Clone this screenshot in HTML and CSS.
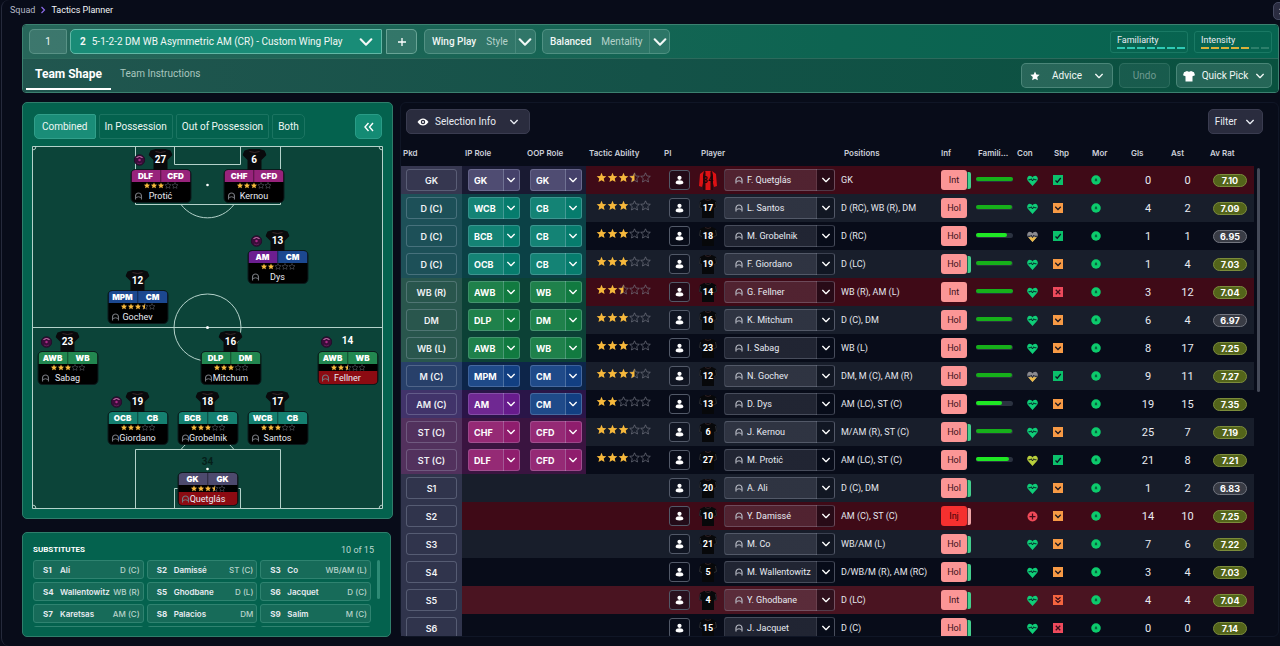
FILE: index.html
```html
<!DOCTYPE html>
<html lang="en">
<head>
<meta charset="utf-8">
<meta name="viewport" content="width=device-width, initial-scale=1">
<title>Tactics Planner</title>
<link rel="stylesheet" href="styles.css">
</head>
<body>
<svg class="sprite" aria-hidden="true">
  <symbol id="chev" viewBox="0 0 12 12"><path d="M2 4l4 4 4-4" fill="none" stroke="currentColor" stroke-width="1.6" stroke-linecap="round" stroke-linejoin="round"/></symbol>
  <symbol id="star" viewBox="0 0 20 20"><path d="M10 1l2.700 6 6.600.7-4.900 4.400 1.400 6.500L10 15.300l-5.800 3.300 1.400-6.500L.7 7.700l6.600-.7z"/></symbol>
  <symbol id="face" viewBox="0 0 16 16"><path d="M2 15V8a6 6 0 0 1 12 0v7" fill="none" stroke="currentColor" stroke-width="2.400"/><path d="M3 11q5-3 10 0" fill="none" stroke="currentColor" stroke-width="2"/></symbol>
  <symbol id="person" viewBox="0 0 16 18"><circle cx="8" cy="5" r="3.800"/><path d="M1 14c0-3 3-4.500 7-4.500s7 1.500 7 4.500c0 1.800-3 3-7 3s-7-1.200-7-3z"/></symbol>
  <symbol id="shirt" viewBox="0 0 24 22"><path d="M7 1h10l5 1.500L24 7l-5 5v10H5V12L0 7l2-4.500z" fill="#090a0c"/><path d="M7 3.500q5 2 10 0" fill="none" stroke="#3a2629" stroke-width="1"/></symbol>
  <symbol id="kit" viewBox="0 0 18 20"><path d="M5 1h8l4 2 1 7-3 1v9H3v-9l-3-1 1-7z" fill="#07080a"/><path d="M1.500 4L.5 9.500 3 10.500M16.500 4l1 5.500-2.500 1" fill="none" stroke="#34363d" stroke-width=".8"/><path d="M6 1.500q3 2 6 0" fill="none" stroke="#3a2629" stroke-width=".8"/></symbol>
  <symbol id="stripes" viewBox="0 0 18 20"><path d="M5 1h8l4 3 1 12-3 1-1-4v7H4v-7l-1 4-3-1L1 4z" fill="#dd1114"/><path d="M5 1l1.500.5V20H4V5zM13 1l-1.500.5V20H14V5z" fill="#2a070b"/></symbol>
  <symbol id="heart" viewBox="0 0 22 22"><path d="M11 22L2 12C-1.500 8 1 1.500 5.500 1.500 8 1.500 10 3 11 5 12 3 14 1.500 16.500 1.500 21 1.500 23.500 8 20 12z" fill="currentColor"/><path d="M3 9.500h3.500l2-2 2.500 4.500 2.500-4.500 2 2H19" fill="none" stroke="#081020" stroke-width="1.800"/></symbol>
  <symbol id="heart-low" viewBox="0 0 22 22"><path d="M11 22L2 12C-1.500 8 1 1.500 5.500 1.500 8 1.500 10 3 11 5 12 3 14 1.500 16.500 1.500 21 1.500 23.500 8 20 12z" fill="#8a8a90"/><path d="M2.500 12.500h17L11 22z" fill="#edba48"/><path d="M2 10.500h4.500l2-2L11 13l2.500-4.500 2 2H20" fill="none" stroke="#081020" stroke-width="1.800"/></symbol>
  <symbol id="injury" viewBox="0 0 22 22"><circle cx="11" cy="11" r="10" fill="#f04a58"/><path d="M11 5v12M5 11h12" stroke="#400b18" stroke-width="2.500"/></symbol>
  <symbol id="check" viewBox="0 0 20 20"><path d="M0 0h20v20H0z" fill="#0bc16b"/><path d="M5 11l3.500 3.500L15.500 6" fill="none" stroke="#0b1524" stroke-width="2.500"/></symbol>
  <symbol id="ok" viewBox="0 0 20 20"><path d="M0 0h20v20H0z" fill="#f79a45"/><path d="M4.500 7.500L10 13l5.500-5.500" fill="none" stroke="#1a1620" stroke-width="2.500"/></symbol>
  <symbol id="low" viewBox="0 0 20 20"><path d="M0 0h20v20H0z" fill="#f5653f"/><path d="M5 4.500L10 9l5-4.500M5 10.500L10 15l5-4.500" fill="none" stroke="#3a0d18" stroke-width="2.500"/></symbol>
  <symbol id="bad" viewBox="0 0 20 20"><path d="M0 0h20v20H0z" fill="#ee4a5c"/><path d="M5.500 5.500l9 9M14.500 5.500l-9 9" fill="none" stroke="#3a0d18" stroke-width="2.500"/></symbol>
  <symbol id="morale" viewBox="0 0 22 22"><circle cx="11" cy="11" r="10.500" fill="#0ccb6c"/><path d="M8.500 14.500V10L11 6.500l2.500 3.500v4.500L11 13z" fill="#07633f"/></symbol>
  <symbol id="ball" viewBox="0 0 24 24"><circle cx="12" cy="12" r="10.500" fill="#3b0d3a" stroke="#20102a" stroke-width="2"/><path d="M6 7q6-4 12 0" fill="none" stroke="#d97fb6" stroke-width="2"/><circle cx="12" cy="12" r="2.500" fill="#a82c86"/><path d="M7 18q5 3 10 0" fill="none" stroke="#6d2464" stroke-width="1.500"/></symbol>
</svg>

<div class="frame">
  <header class="crumbs">
    <nav aria-label="Breadcrumb"><a href="#">Squad</a><svg viewBox="0 0 8 10"><path d="M2 1l4 4-4 4" fill="none" stroke="#8d6bea" stroke-width="1.600"/></svg><span>Tactics Planner</span></nav>
    <button class="close" aria-label="Close"><svg viewBox="0 0 10 10"><path d="M1 1l8 8M9 1L1 9" stroke="#fff" stroke-width="1.800"/></svg></button>
  </header>

  <section class="toolbar">
    <div class="bar bar-top">
      <button class="tb slot">1</button>
      <button class="tb tactic"><b>2</b><span>5-1-2-2 DM WB Asymmetric AM (CR) - Custom Wing Play</span><svg class="ic16"><use href="#chev"/></svg></button>
      <button class="tb add" aria-label="Add tactic"><svg class="ic10" viewBox="0 0 10 10"><path d="M5 1v8M1 5h8" stroke="#fff" stroke-width="1.300"/></svg></button>
      <button class="tb choice"><span>Wing Play</span><i>Style</i><em><svg class="ic16"><use href="#chev"/></svg></em></button>
      <button class="tb choice"><span>Balanced</span><i>Mentality</i><em><svg class="ic16"><use href="#chev"/></svg></em></button>
      <div class="meters">
        <div class="meter teal"><span>Familiarity</span><div class="dashes"><i></i><i></i><i></i><i></i><i></i><i></i><i></i></div></div>
        <div class="meter gold"><span>Intensity</span><div class="dashes"><i></i><i></i><i></i><i></i><i></i><i class="off"></i><i class="off"></i></div></div>
      </div>
    </div>
    <div class="bar bar-bottom">
      <nav class="tabs"><a class="active" href="#">Team Shape</a><a href="#">Team Instructions</a></nav>
      <div class="actions">
        <button class="tb advice"><svg class="ic10 fill"><use href="#star"/></svg>Advice<svg class="ic10"><use href="#chev"/></svg></button>
        <button class="tb undo" disabled>Undo</button>
        <button class="tb pick"><svg class="ic12" viewBox="0 0 24 22"><path d="M8 1q4 3 8 0l6 2.500 2 6-5 2v10.500H5V11.500L0 9.500l2-6z" fill="#fff"/></svg>Quick Pick<svg class="ic10"><use href="#chev"/></svg></button>
      </div>
    </div>
  </section>

  <main>
    <div class="left">
      <section class="pitch-panel">
        <div class="modes">
          <button class="on">Combined</button><button>In Possession</button><button>Out of Possession</button><button class="last">Both</button>
          <button class="collapse" aria-label="Collapse"><svg viewBox="0 0 12 12"><path d="M5.500 2L2 6l3.500 4M10 2L6.500 6 10 10" fill="none" stroke="#fff" stroke-width="1.400"/></svg></button>
        </div>
        <div class="pitch" id="pitch">
          <svg class="lines" viewBox="0 0 351 363" aria-hidden="true">
            <g fill="none" stroke="#b4d2ca" stroke-width="1">
              <path d="M.5.5h350v362H.5zM.5 181.500h350M103.500.5v58h145V.5M142.500.5v18h66V.5M149 58.500a33 33 0 0 0 53 0M103.500 362.500v-59h145v59M142.500 362.500v-20h66v20M149 303.500a33 33 0 0 1 53 0"/>
              <circle cx="175.500" cy="181.500" r="33.500"/>
              <path d="M4 .5a3.500 3.500 0 0 1-3.500 3.500M347 .5a3.500 3.500 0 0 0 3.500 3.500M4 362.500a3.500 3.500 0 0 0-3.500-3.500M347 362.500a3.500 3.500 0 0 1 3.500-3.500"/>
            </g>
            <g fill="#fff"><circle cx="175.500" cy="39" r="1.300"/><circle cx="175.500" cy="181.500" r="1.500"/><circle cx="175.500" cy="323" r="1.300"/></g>
          </svg>
        </div>
      </section>
      <section class="subs">
        <div class="subs-head"><h2>SUBSTITUTES</h2><span>10 of 15</span></div>
        <div class="subs-scroll"><div class="subs-grid" id="subs"></div><div class="thumb"></div></div>
      </section>
    </div>

    <section class="squad">
      <div class="squad-tools">
        <button class="dark info"><svg class="ic12" viewBox="0 0 24 24"><path d="M1 12q5-7 11-7t11 7q-5 7-11 7T1 12z" fill="#fff"/><circle cx="12" cy="12" r="4.500" fill="#2a2c3e"/><circle cx="12" cy="12" r="2" fill="#fff"/></svg>Selection Info<svg class="ic10"><use href="#chev"/></svg></button>
        <button class="dark">Filter<svg class="ic10"><use href="#chev"/></svg></button>
      </div>
      <div class="table-wrap">
        <table>
          <colgroup><col class="w61"><col class="w62"><col class="w62"><col class="w76"><col class="w31"><col class="w145"><col class="w100"><col class="w34"><col class="w42"><col class="w34"><col class="w36"><col class="w42"><col class="w40"><col class="w39"><col class="w49"></colgroup>
          <thead><tr><th class="h-pkd">Pkd</th><th>IP Role</th><th>OOP Role</th><th>Tactic Ability</th><th class="h-pi">PI</th><th class="h-player">Player</th><th class="h-pos">Positions</th><th>Inf</th><th class="h-fam">Famili...</th><th>Con</th><th class="h-shp">Shp</th><th class="h-mor">Mor</th><th class="h-num">Gls</th><th class="h-num">Ast</th><th class="h-num">Av Rat</th></tr></thead>
          <tbody id="rows"></tbody>
        </table>
        <div class="vbar"></div>
      </div>
    </section>
  </main>
</div>
<script src="app.js"></script>
</body>
</html>
```
FILE: styles.css
```css
* { box-sizing: border-box; }
body { margin: 0; height: 100vh; overflow: hidden; background: #080c19; color: #e8ebf2; font-family: Roboto, "Liberation Sans", sans-serif; font-size: 10px; }
button, select { font: inherit; color: inherit; margin: 0; }
a { color: inherit; text-decoration: none; }
i, em { font-style: normal; }
svg { display: block; flex: none; }
.sprite { position: absolute; width: 0; height: 0; }
.ic10 { width: 10px; height: 10px; }
.ic12 { width: 12px; height: 12px; }
.ic16 { width: 16px; height: 16px; }
.fill { fill: #fff; }

.frame { height: 100vh; margin-left: 1px; padding: 0 1px 9px 20px; border-left: 1px solid #252a3b; border-radius: 8px 0 0 8px; display: flex; flex-direction: column; }
.crumbs { height: 24px; display: flex; align-items: flex-start; justify-content: space-between; margin-left: -12px; margin-right: -12px; }
.crumbs nav { display: flex; align-items: center; gap: 5px; padding-top: 5px; font-size: 9px; color: #b5bac8; }
.crumbs nav span { color: #f2f4f8; }
.crumbs nav svg { width: 6px; height: 8px; }
.close { width: 18px; height: 18px; margin-top: 2px; padding: 0 5px; border: 1px solid #454a60; border-radius: 5px; background: #2a2c40; }
.close svg { width: 7px; height: 7px; }

.toolbar { border: 1px solid #3c8170; border-radius: 4px; overflow: hidden; flex: none; }
.bar { display: flex; align-items: center; height: 34px; padding: 0 6px; }
.bar-top { background: linear-gradient(90deg, #27665a, #0d6451 65%, #066450); border-bottom: 1px solid #2c6a5c; }
.bar-bottom { height: 33px; background: linear-gradient(90deg, #21564f, #145248 50%, #09513f); padding: 0 6px 0 3px; justify-content: space-between; }
.tb { height: 25px; border: 1px solid rgba(160, 210, 195, .3); border-radius: 5px; background: rgba(150, 190, 185, .2); display: flex; align-items: center; justify-content: center; padding: 0; color: #f1f7f5; white-space: nowrap; flex: none; }
.slot { width: 38px; border-radius: 5px 2px 2px 5px; margin-right: 3px; }
.tactic { width: 312px; background: #198c77; border-color: #62b8a6; border-radius: 5px 1px 1px 5px; padding: 0 7px 0 9px; gap: 6px; margin-right: 4px; }
.tactic span { flex: 1; text-align: left; }
.add { width: 31px; border-radius: 1px 5px 5px 1px; border-color: rgba(160, 210, 195, .5); margin-right: 7px; }
.choice { padding-left: 7px; margin-right: 6px; }
.choice span { font-weight: 500; }
.choice i { color: #b6d2ca; margin: 0 7px 0 10px; }
.choice em { height: 23px; width: 20px; border-left: 1px solid rgba(160, 210, 195, .2); display: flex; align-items: center; justify-content: center; }
.meters { margin-left: auto; display: flex; gap: 6px; }
.meter { width: 78px; height: 22px; border: 1px solid #1a7964; border-radius: 3px; padding: 3px 2px 0 6px; font-size: 9px; line-height: 11px; }
.dashes { display: flex; gap: 2px; margin-top: 1px; }
.dashes i { flex: 1; height: 2px; background: #2fc9b4; }
.gold .dashes i { background: #d9b13a; }
.gold .dashes .off { background: #2d7f6b; }
.tabs { display: flex; align-self: stretch; }
.tabs a { display: flex; align-items: center; padding: 0 9px; color: #a9c6bf; border-bottom: 2px solid transparent; margin-bottom: 2px; }
.tabs .active { font-weight: 700; font-size: 12px; color: #fff; border-color: #fff; }
.actions { display: flex; gap: 6px; }
.advice { width: 92px; gap: 12px; }
.undo { width: 51px; color: #6f9a90; background: rgba(150, 190, 185, .1); border-color: rgba(160, 210, 195, .15); }
.pick { width: 96px; gap: 7px; }

main { flex: 1; min-height: 0; display: grid; grid-template-columns: 371px minmax(0, 1fr); gap: 7px; padding-top: 9px; }
.left { display: flex; flex-direction: column; gap: 13px; }
.pitch-panel, .subs { background: #04624e; border: 1px solid #2f7e6b; border-radius: 5px; }
.pitch-panel { padding: 11px 9px 9px; }
.modes { display: flex; gap: 3px; padding: 0 1px 7px 2px; }
.modes button { height: 25px; padding: 0 5px; border: 1px solid #1b7461; background: transparent; border-radius: 2px; color: #eef7f4; white-space: nowrap; }
.modes .on { background: #1a8d78; border-color: #319f8a; border-radius: 5px 2px 2px 5px; padding: 0 7px; }
.modes .last { border-radius: 2px 5px 5px 2px; }
.modes .collapse { margin-left: auto; width: 27px; background: #148b74; border-color: #2a9c87; border-radius: 5px; display: grid; place-items: center; }
.collapse svg { width: 12px; height: 12px; }
.pitch { position: relative; background: #0c4439; aspect-ratio: 351 / 363; }
.lines { width: 100%; }
.card { position: absolute; width: 61px; transform: translateX(-50%); }
.card .top { position: relative; height: 21px; display: grid; place-items: center; }
.card .top > svg { grid-area: 1 / 1; width: 24px; height: 22px; }
.card .num { grid-area: 1 / 1; font-weight: 700; font-size: 10px; color: #fff; }
.card .num.faint { color: #051f1a; }
.card .top .orb { position: absolute; left: 3px; top: 6px; width: 12px; height: 12px; }
.card .box { border: 1px solid #0b1a1c; border-radius: 5px; overflow: hidden; background: #000; }
.card .roles { display: flex; font: 700 8px/12px Inter, sans-serif; text-align: center; color: #fff; }
.card .roles b { flex: 1 1 0; }
.card .roles b + b { border-left: 1px solid rgba(0, 0, 0, .25); }
.card .stars { height: 7px; width: 35px; margin: 0 auto; }
.card .name { display: grid; grid-template-columns: 8px 1fr 8px; align-items: center; height: 13px; font-size: 9px; padding: 0 3px; }
.card .name span { justify-self: center; white-space: nowrap; }
.card .name svg { width: 8px; height: 8px; color: #74767c; }
.card .name.red { background: #8c0b12; }
.r-gk { background: #4d4a6e; } .r-cb { background: #158070; } .r-wb { background: #228750; } .r-cm { background: #1c4890; } .r-am { background: #6c1e90; } .r-st { background: #97237b; }

.subs { flex: 1; min-height: 0; width: 369px; padding: 10px 10px 8px; display: flex; flex-direction: column; }
.subs-head { display: flex; justify-content: space-between; align-items: center; height: 13px; padding-right: 6px; font-size: 9px; color: #bcd8d0; margin-bottom: 4px; }
.subs h2 { margin: 0; font: 700 8px Roboto, sans-serif; color: #fff; }
.subs-scroll { display: flex; gap: 6px; overflow: hidden; max-height: 67px; }
.subs-grid { flex: 1; display: grid; grid-template-columns: repeat(3, 1fr); grid-auto-rows: 19px; gap: 3px; }
.sub { display: flex; align-items: center; background: #176b59; border: 1px solid #2f8370; border-radius: 3px; padding: 0 3px 0 9px; font: 600 8px "Inter", sans-serif; white-space: nowrap; }
.sub b { width: 17px; font-weight: 700; }
.sub span { flex: 1; }
.sub i { color: #b9d3cb; font-weight: 500; }
.thumb { width: 3px; height: 39px; border-radius: 2px; background: #2d8a75; }

.squad { border: 1px solid #101626; border-radius: 6px; min-height: 0; display: flex; flex-direction: column; min-width: 0; }
.squad-tools { display: flex; justify-content: space-between; padding: 6px 15px 6px 5px; }
.dark { height: 25px; padding: 0 7px 0 6px; border: 1px solid #3a3c50; border-radius: 5px; background: #2a2c3e; display: flex; align-items: center; gap: 8px; }
.dark.info { padding: 0 10px; gap: 6px; }
.info .ic10 { margin-left: 7px; }
.table-wrap { flex: 1; min-height: 0; overflow: hidden; display: flex; align-items: flex-start; gap: 3px; padding-right: 18px; }
.vbar { width: 3px; height: 224px; margin-top: 28px; border-radius: 2px; background: #454a58; }
table { flex: 1; min-width: 0; width: 100%; table-layout: fixed; border-collapse: collapse; }
.w61 { width: 61px; } .w62 { width: 62px; } .w76 { width: 76px; } .w31 { width: 31px; } .w145 { width: 145px; } .w100 { width: 100px; } .w34 { width: 34px; } .w42 { width: 42px; } .w36 { width: 36px; } .w40 { width: 40px; } .w39 { width: 39px; } .w49 { width: 49px; }
th { height: 26px; padding: 0 0 0 3px; text-align: left; font: 600 8px Inter, sans-serif; color: #ccd0da; white-space: nowrap; }
th.h-pkd { padding-left: 2px; } th.h-pi { padding-left: 2px; } th.h-player { padding-left: 8px; } th.h-pos, th.h-fam, th.h-shp { padding-left: 6px; } th.h-mor { padding-left: 8px; } th.h-num { padding-left: 5px; }
td { height: 28px; padding: 0 0 0 3px; white-space: nowrap; }
tbody tr:nth-child(even) { background: #181e2b; }
tbody tr.alert { background: #3f0a17; }
tbody tr.alert.hover { background: #4a1421; }
td.pkd { padding: 0 5px; }
.pkd span { display: grid; place-items: center; height: 22px; border: 1px solid rgba(200, 210, 230, .25); border-radius: 3px; font: 600 9px Inter, sans-serif; color: #f0f2f6; }
.sel { display: grid; align-items: center; }
.sel select, .sel svg { grid-area: 1 / 1; }
.sel select { appearance: none; height: 22px; width: 100%; border: 1px solid rgba(210, 220, 240, .22); border-radius: 3px; outline: 0; }
.sel svg { width: 10px; height: 10px; justify-self: end; margin-right: 4px; pointer-events: none; color: #fff; }
.role { width: 52px; margin-left: 3px; }
.role select { padding: 0 0 0 5px; font: 700 9px Inter, sans-serif; color: #fff; background: linear-gradient(90deg, rgba(255, 255, 255, .06) 34px, rgba(210, 225, 240, .3) 34px, rgba(210, 225, 240, .3) 35px, transparent 35px); }
.g-gk .pkd { background: #363750; } .g-gk .rc { background: #191a32; } .g-gk .role { background: #45416a; }
.g-cb .pkd { background: #1d5058; } .g-cb .rc { background: #0b4146; } .g-cb .role { background: #067c6d; }
.g-wb .pkd { background: #29564d; } .g-wb .rc { background: #0c4136; } .g-wb .role { background: #117a40; }
.g-cm .pkd { background: #28406a; } .g-cm .rc { background: #0d2549; } .g-cm .role { background: #123f82; }
.g-am .pkd { background: #41336a; } .g-am .rc { background: #2a1548; }
.g-st .pkd { background: #52315d; } .g-st .rc { background: #3a1440; } .g-st .role { background: #8f1d6d; }
.g-s .pkd { background: #30344c; }
.g-am .role.r-am { background: #671b8c; } .g-am .role.r-cm { background: #123f82; }
.role { border-radius: 3px; }
.stars { display: block; }
td .stars { width: 55px; height: 11px; margin: 0 0 5px 7px; }
.pi { width: 21px; height: 20px; margin-left: 4px; border: 1px solid #525968; border-radius: 3px; background: rgba(8, 12, 25, .5); display: grid; place-items: center; padding: 0; }
.pi svg { width: 9px; height: 10px; fill: #fff; }
.who { display: flex; align-items: center; gap: 7px; padding-left: 3px; }
.kit { display: grid; place-items: center; width: 18px; }
.kit svg, .kit b { grid-area: 1 / 1; }
.kit svg { width: 18px; height: 20px; }
.kit b { font-weight: 700; font-size: 9px; color: #fff; }
.kit b.faint { color: #1b0508; }
.who .sel { flex: 1; margin-right: 3px; }
.who select { padding-left: 22px; font-size: 9px; background: linear-gradient(270deg, rgba(8, 12, 25, .4) 17px, rgba(220, 225, 240, .22) 17px, rgba(220, 225, 240, .22) 18px, rgba(190, 190, 210, .14) 18px); }
.who .sel .face { justify-self: start; margin-left: 11px; width: 8px; height: 8px; color: #b7bac4; }
.who option { color: #111; }
.pos { font-size: 9px; color: #e4e7ee; }
.inf { display: flex; align-items: center; }
.inf b { width: 26px; height: 20px; border-radius: 3px; background: #fb9696; color: #3a1018; font: 400 9px/20px Roboto, sans-serif; text-align: center; }
.inf .injured { background: #f5302f; color: #3b0207; }
.inf i { width: 4px; height: 17px; border-radius: 0 2px 2px 0; background: #45ce8d; border-left: 1px solid #176b50; }
.inf .pink { background: #f0a5a5; border-color: #7c2630; }
.fam { width: 37px; height: 5px; margin: 0 0 2px 1px; border-radius: 3px; background: #2b3240; border: 1px solid #2b3240; border-width: 0 0 1px; }
.fam i { display: block; height: 4px; border-radius: 2px; background: #16b01a; }
.fam .fresh { background: #1fe824; }
.con svg { width: 11px; height: 11px; margin-left: 10px; color: #0fce78; }
.con .fair { color: #b9cf3c; }
.shp svg { width: 10px; height: 10px; margin-left: 2px; }
.mor svg { width: 10px; height: 10px; margin-left: 4px; }
.numc { text-align: center; font-size: 11px; padding-left: 4px; }
.rat { display: block; width: 34px; height: 13px; margin-left: 5px; border-radius: 7px; border: 1px solid #7c8c3b; background: #53641a; color: #fff; font: 700 9px/11px Inter, sans-serif; text-align: center; }
.rat.mid { background: #393c45; border-color: #737680; }
```
FILE: app.js
```js
const use = (id, cls = "") => `<svg class="${cls}" aria-hidden="true"><use href="#${id}"/></svg>`;

const STAR = "M10 1.500l2.500 5.700 6.300.6-4.700 4.200 1.400 6.200L10 15l-5.500 3.200 1.400-6.200L1.200 7.800l6.300-.6z";
const HALF = "M10 1.500V15l-5.500 3.200 1.400-6.200L1.200 7.800l6.300-.6z";

function stars(value) {
  let out = "";
  for (let i = 0; i < 5; i++) {
    const full = value >= i + 1;
    out += `<g transform="translate(${i * 20} 0)">`;
    out += full
      ? `<path d="${STAR}" fill="#f6b83c"/>`
      : `<path d="${STAR}" fill="none" stroke="#757985" stroke-width="1.200"/>`;
    if (!full && value > i) out += `<path d="${HALF}" fill="#f6b83c"/>`;
    out += "</g>";
  }
  return `<svg class="stars" viewBox="0 0 100 20" role="img" aria-label="${value} stars">${out}</svg>`;
}

const roleGroup = {
  GK: "gk", CB: "cb", WCB: "cb", BCB: "cb", OCB: "cb", WB: "wb", AWB: "wb",
  DM: "wb", DLP: "wb", CM: "cm", MPM: "cm", AM: "am", CHF: "st", CFD: "st", DLF: "st"
};

// x and y are measured on a 351 x 363 pitch
const cards = [
  { n: 27, name: "Protić", ip: "DLF", oop: "CFD", s: 3, x: 128.5, y: 2, orb: 1 },
  { n: 6, name: "Kernou", ip: "CHF", oop: "CFD", s: 3, x: 222, y: 2 },
  { n: 13, name: "Dys", ip: "AM", oop: "CM", s: 2, x: 245.5, y: 83, orb: 1 },
  { n: 12, name: "Gochev", ip: "MPM", oop: "CM", s: 3.5, x: 105.5, y: 123 },
  { n: 23, name: "Sabag", ip: "AWB", oop: "WB", s: 3, x: 35.5, y: 184, orb: 1 },
  { n: 16, name: "Mitchum", ip: "DLP", oop: "DM", s: 3, x: 198.5, y: 184 },
  { n: 14, name: "Fellner", ip: "AWB", oop: "WB", s: 2.5, x: 315.5, y: 184, orb: 1, red: 1, bare: 1 },
  { n: 19, name: "Giordano", ip: "OCB", oop: "CB", s: 3, x: 105.5, y: 244, orb: 1 },
  { n: 18, name: "Grobelnik", ip: "BCB", oop: "CB", s: 3, x: 175.5, y: 244 },
  { n: 17, name: "Santos", ip: "WCB", oop: "CB", s: 3, x: 245.5, y: 244 },
  { n: 34, name: "Quetglás", ip: "GK", oop: "GK", s: 3.5, x: 175.5, y: 305, red: 1, bare: 1, faint: 1 }
];

document.getElementById("pitch").insertAdjacentHTML("beforeend", cards.map(c => `
  <div class="card" style="left:${c.x / 3.51}%;top:${c.y / 3.63}%">
    <div class="top">${c.bare ? "" : use("shirt")}<span class="num${c.faint ? " faint" : ""}">${c.n}</span>${c.orb ? use("ball", "orb") : ""}</div>
    <div class="box">
      <div class="roles"><b class="r-${roleGroup[c.ip]}">${c.ip}</b><b class="r-${roleGroup[c.oop]}">${c.oop}</b></div>
      ${stars(c.s)}
      <div class="name${c.red ? " red" : ""}">${use("face")}<span>${c.name}</span></div>
    </div>
  </div>`).join(""));

const subs = [
  ["S1", "Ali", "D (C)"], ["S2", "Damissé", "ST (C)"], ["S3", "Co", "WB/AM (L)"],
  ["S4", "Wallentowitz", "WB (R)"], ["S5", "Ghodbane", "D (L)"], ["S6", "Jacquet", "D (C)"],
  ["S7", "Karetsas", "AM (C)"], ["S8", "Palacios", "DM"], ["S9", "Salim", "M (C)"],
  ["", "", ""], ["", "", ""], ["", "", ""]
];
document.getElementById("subs").innerHTML = subs.map(([slot, name, pos]) =>
  `<div class="sub"><b>${slot}</b><span>${name}</span><i>${pos}</i></div>`).join("");

// pkd, group, ip, oop, stars, number, player, positions, inf, tag, familiarity, condition, sharpness, goals, assists, rating
const rows = [
  ["GK", "gk", "GK", "GK", 3.5, 34, "F. Quetglás", "GK", "Int", 1, 100, "good", "check", 0, 0, "7.10"],
  ["D (C)", "cb", "WCB", "CB", 3, 17, "L. Santos", "D (RC), WB (R), DM", "Hol", 0, 97, "good", "ok", 4, 2, "7.09"],
  ["D (C)", "cb", "BCB", "CB", 3, 18, "M. Grobelnik", "D (RC)", "Hol", 0, 85, "tired", "check", 1, 1, "6.95"],
  ["D (C)", "cb", "OCB", "CB", 3, 19, "F. Giordano", "D (LC)", "Hol", 1, 96, "good", "ok", 1, 4, "7.03"],
  ["WB (R)", "wb", "AWB", "WB", 2.5, 14, "G. Fellner", "WB (R), AM (L)", "Int", 0, 100, "good", "bad", 3, 12, "7.04"],
  ["DM", "wb", "DLP", "DM", 3, 16, "K. Mitchum", "D (C), DM", "Hol", 0, 98, "good", "ok", 6, 4, "6.97"],
  ["WB (L)", "wb", "AWB", "WB", 3, 23, "I. Sabag", "WB (L)", "Hol", 0, 98, "good", "ok", 8, 17, "7.25"],
  ["M (C)", "cm", "MPM", "CM", 3.5, 12, "N. Gochev", "DM, M (C), AM (R)", "Hol", 0, 98, "tired", "check", 9, 11, "7.27"],
  ["AM (C)", "am", "AM", "CM", 2, 13, "D. Dys", "AM (LC), ST (C)", "Hol", 0, 70, "good", "ok", 19, 15, "7.35"],
  ["ST (C)", "st", "CHF", "CFD", 3, 6, "J. Kernou", "M/AM (R), ST (C)", "Hol", 1, 98, "good", "ok", 25, 7, "7.19"],
  ["ST (C)", "st", "DLF", "CFD", 3, 27, "M. Protić", "AM (LC), ST (C)", "Hol", 0, 90, "fair", "check", 21, 8, "7.21"],
  ["S1", "s", "", "", 0, 20, "A. Ali", "D (C), DM", "Hol", 1, 0, "good", "ok", 1, 2, "6.83"],
  ["S2", "s", "", "", 0, 10, "Y. Damissé", "AM (C), ST (C)", "Inj", 2, 0, "injury", "ok", 14, 10, "7.25"],
  ["S3", "s", "", "", 0, 21, "M. Co", "WB/AM (L)", "Hol", 1, 0, "good", "ok", 7, 6, "7.22"],
  ["S4", "s", "", "", 0, 5, "M. Wallentowitz", "D/WB/M (R), AM (RC)", "Hol", 1, 0, "good", "ok", 3, 4, "7.03"],
  ["S5", "s", "", "", 0, 4, "Y. Ghodbane", "D (LC)", "Int", 1, 0, "good", "low", 4, 4, "7.04"],
  ["S6", "s", "", "", 0, 15, "J. Jacquet", "D (C)", "Hol", 1, 0, "good", "bad", 0, 0, "7.14"]
];

const role = (name, label) => name
  ? `<div class="sel role r-${roleGroup[name]}"><select aria-label="${label}"><option>${name}</option></select>${use("chev")}</div>` : "";

const condition = con => con === "injury" ? use("injury") : con === "tired" ? use("heart-low") : use("heart", con);

document.getElementById("rows").innerHTML = rows.map(r => {
  const [pkd, group, ip, oop, ability, num, player, pos, inf, tag, fam, con, shp, gls, ast, rating] = r;
  const alert = inf !== "Hol" ? (pkd === "S5" ? "alert hover" : "alert") : "";
  return `<tr class="g-${group} ${alert}">
    <td class="pkd"><span>${pkd}</span></td>
    <td class="rc">${role(ip, "In possession role")}</td>
    <td class="rc">${role(oop, "Out of possession role")}</td>
    <td>${ability ? stars(ability) : ""}</td>
    <td><button class="pi" aria-label="Player instructions">${use("person")}</button></td>
    <td><div class="who"><div class="kit">${use(num === 34 ? "stripes" : "kit")}<b class="${num === 34 ? "faint" : ""}">${num}</b></div>
      <div class="sel"><select aria-label="Player"><option>${player}</option></select>${use("face", "face")}${use("chev")}</div></div></td>
    <td class="pos">${pos}</td>
    <td><div class="inf"><b class="${inf === "Inj" ? "injured" : ""}">${inf}</b>${tag ? `<i class="${tag === 2 ? "pink" : ""}"></i>` : ""}</div></td>
    <td>${fam ? `<div class="fam"><i class="${fam < 95 ? "fresh" : ""}" style="width:${fam}%"></i></div>` : ""}</td>
    <td class="con">${condition(con)}</td>
    <td class="shp">${use(shp)}</td>
    <td class="mor">${use("morale")}</td>
    <td class="numc">${gls}</td>
    <td class="numc">${ast}</td>
    <td><span class="rat ${parseFloat(rating) < 7 ? "mid" : ""}">${rating}</span></td>
  </tr>`;
}).join("");
```
